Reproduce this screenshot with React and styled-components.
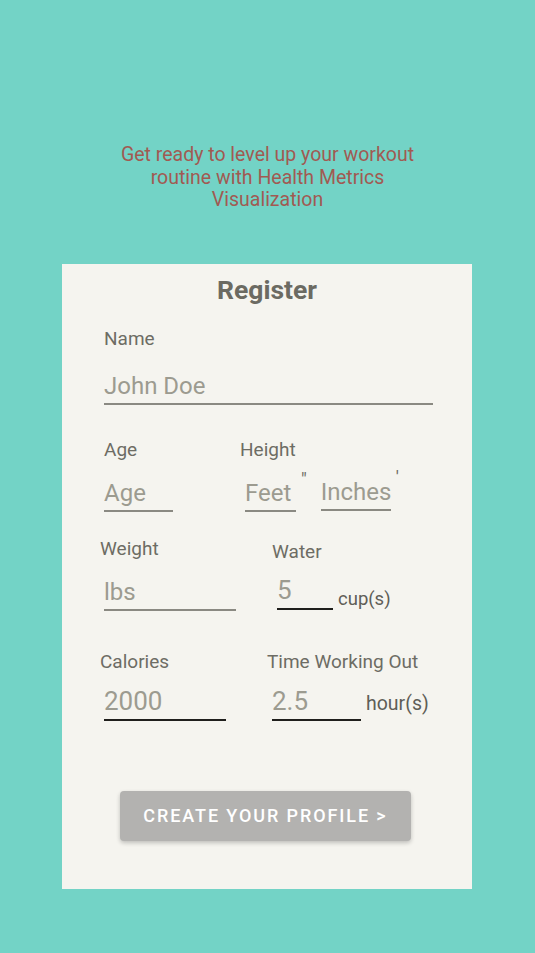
import React from "react";
import styled, { createGlobalStyle } from "styled-components";

const GlobalStyle = createGlobalStyle`
  body {
    margin: 0;
    background: #73d3c6;
    font-family: Roboto, "Noto Sans", sans-serif;
  }
`;

function App() {
  return (
    <>
      <GlobalStyle />
      <Page>
        <Tagline>
          Get ready to level up your workout routine with Health Metrics
          Visualization
        </Tagline>
        <Card>
          <Title>Register</Title>
          <Row $pl={42} $mt={23}>
            <Field>
              <Label>Name</Label>
              <Input $w={329} $mt={22} placeholder="John Doe" />
            </Field>
          </Row>
          <Row $pl={42} $mt={34}>
            <Field $w={136}>
              <Label>Age</Label>
              <Input $w={69} $mt={18} placeholder="Age" />
            </Field>
            <Field>
              <Label>Height</Label>
              <Inline $ml={5} $mt={17}>
                <Input $w={51} placeholder="Feet" />
                <Mark $ml={5} $mr={14}>"</Mark>
                <Input $w={70} $up={1} placeholder="Inches" />
                <Mark $ml={5} $top={-10}>'</Mark>
              </Inline>
            </Field>
          </Row>
          <Row $pl={38} $mt={26}>
            <Field $w={172}>
              <Label>Weight</Label>
              <Input $w={132} $ml={4} $mt={18} placeholder="lbs" />
            </Field>
            <Field $top={3}>
              <Label>Water</Label>
              <Inline $ml={5} $mt={12}>
                <Input $w={56} $value defaultValue="5" />
                <Unit $size={18.5} $mb={0}>cup(s)</Unit>
              </Inline>
            </Field>
          </Row>
          <Row $pl={38} $mt={40}>
            <Field $w={167}>
              <Label>Calories</Label>
              <Input $w={122} $ml={4} $mt={13} $value defaultValue="2000" />
            </Field>
            <Field>
              <Label>Time Working Out</Label>
              <Inline $ml={5} $mt={13}>
                <Input $w={89} $value defaultValue="2.5" />
                <Unit $size={19.5} $mb={6}>hour(s)</Unit>
              </Inline>
            </Field>
          </Row>
          <ButtonRow>
            <CreateButton>CREATE YOUR PROFILE &gt;</CreateButton>
          </ButtonRow>
        </Card>
      </Page>
    </>
  );
}
export default App;

const Page = styled.main`
  display: flex;
  flex-direction: column;
  align-items: center;
  padding-top: 144px;
  padding-bottom: 64px;
`;

const Tagline = styled.p`
  margin: 0;
  width: 300px;
  text-align: center;
  font-size: 19.5px;
  line-height: 22.5px;
  color: #a15a52;
`;

const Card = styled.section`
  width: 410px;
  box-sizing: border-box;
  margin-top: 52px;
  margin-right: 1px;
  padding: 11px 0 48px;
  background: #f5f4ef;
`;

const Title = styled.h1`
  margin: 0;
  text-align: center;
  font-size: 26.5px;
  line-height: 30px;
  font-weight: 700;
  color: #6b6a62;
`;

const Row = styled.div`
  display: flex;
  align-items: flex-start;
  padding-left: ${(p) => p.$pl}px;
  margin-top: ${(p) => p.$mt}px;
`;

const Field = styled.div`
  display: flex;
  flex-direction: column;
  align-items: flex-start;
  width: ${(p) => (p.$w ? `${p.$w}px` : "auto")};
  flex-shrink: 0;
  padding-top: ${(p) => p.$top || 0}px;
`;

const Label = styled.label`
  font-size: 19px;
  line-height: 22px;
  color: #6d6c64;
`;

const Inline = styled.div`
  display: flex;
  align-items: flex-end;
  margin-left: ${(p) => p.$ml || 0}px;
  margin-top: ${(p) => p.$mt || 0}px;
`;

const Input = styled.input`
  display: block;
  box-sizing: border-box;
  width: ${(p) => p.$w}px;
  height: ${(p) => (p.$value ? 35 : 33)}px;
  margin: ${(p) => p.$mt || 0}px 0 ${(p) => p.$up || 0}px ${(p) => p.$ml || 0}px;
  padding: 0 0 3px;
  border: none;
  border-bottom: ${(p) => (p.$value ? "2px solid #1f1f1c" : "2px solid #8a8982")};
  background: transparent;
  outline: none;
  font-family: Roboto, "Noto Sans", sans-serif;
  font-size: ${(p) => (p.$value ? 26 : 24)}px;
  line-height: ${(p) => (p.$value ? 30 : 28)}px;
  color: #9c9b90;

  &::placeholder {
    color: #9c9b90;
    opacity: 1;
  }
`;

const Mark = styled.span`
  align-self: flex-start;
  margin: ${(p) => p.$top || -8}px ${(p) => p.$mr || 0}px 0 ${(p) => p.$ml || 0}px;
  font-size: 18px;
  line-height: 20px;
  color: #6d6c64;
`;

const Unit = styled.span`
  margin-left: 5px;
  margin-bottom: ${(p) => p.$mb}px;
  font-size: ${(p) => p.$size}px;
  line-height: 22px;
  color: #5f5e57;
`;

const ButtonRow = styled.div`
  display: flex;
  padding-left: 58px;
  margin-top: 70px;
`;

const CreateButton = styled.button`
  width: 291px;
  height: 50px;
  border: none;
  border-radius: 4px;
  background: #b3b2b0;
  box-shadow: 0 2px 4px rgba(0, 0, 0, 0.22);
  font-family: Roboto, "Noto Sans", sans-serif;
  font-size: 18px;
  font-weight: 500;
  letter-spacing: 1.9px;
  color: #ffffff;
  cursor: pointer;
`;
